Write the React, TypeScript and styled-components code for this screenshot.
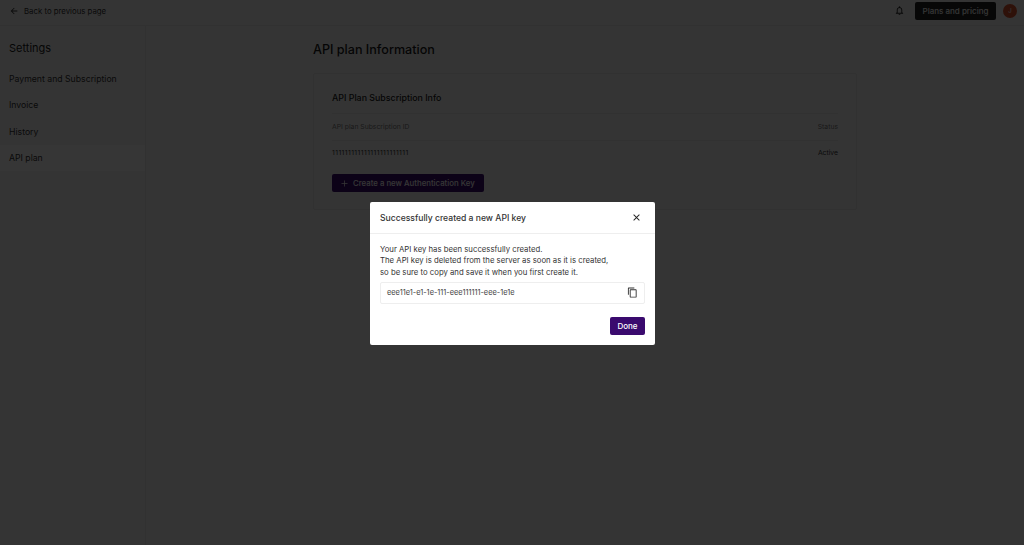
import React from "react";
import styled, { createGlobalStyle } from "styled-components";
import {
  MdArrowBack,
  MdClose,
  MdOutlineContentCopy,
  MdOutlineNotifications,
} from "react-icons/md";
import { FiPlus } from "react-icons/fi";

const GlobalStyle = createGlobalStyle`
  html, body {
    margin: 0;
    padding: 0;
    height: 100%;
    overflow: hidden;
    background: #f6f6f6;
    font-family: Inter, "Liberation Sans", sans-serif;
    color: #1a1a1a;
  }
  * { box-sizing: border-box; }
`;

const Page = styled.div`
  width: 1024px;
  height: 545px;
  display: flex;
  flex-direction: column;
`;
const Header = styled.header`
  height: 26px;
  flex-shrink: 0;
  display: flex;
  align-items: center;
  justify-content: space-between;
  padding: 0 7px 4px 9px;
  border-bottom: 1px solid #e6e6e6;
`;
const BackLink = styled.div`
  display: flex;
  align-items: center;
  gap: 5px;
  font-size: 7.8px;
  color: #333;
  svg { font-size: 10px; }
`;
const HeaderActions = styled.div`
  display: flex;
  align-items: center;
  svg { font-size: 11px; color: #222; }
`;
const PricingButton = styled.button`
  height: 18px;
  width: 81px;
  margin-left: 10px;
  border: 0;
  border-radius: 2px;
  background: #222;
  color: #fff;
  font: 500 8px Inter, sans-serif;
`;
const Avatar = styled.div`
  width: 14px;
  height: 14px;
  margin-left: 7px;
  border-radius: 50%;
  background: #d9502c;
  color: #fff;
  font-size: 6px;
  display: flex;
  align-items: center;
  justify-content: center;
`;
const Body = styled.div`
  flex: 1;
  display: flex;
`;
const Sidebar = styled.aside`
  width: 146px;
  flex-shrink: 0;
  border-right: 1px solid #e6e6e6;
  padding-top: 15px;
`;
const SidebarTitle = styled.h2`
  margin: 0 0 11px;
  padding-left: 9px;
  height: 14px;
  line-height: 14px;
  font-size: 11px;
  font-weight: 400;
`;
const NavItem = styled.div<{ $active?: boolean }>`
  height: 26.3px;
  display: flex;
  align-items: center;
  padding-left: 9px;
  font-size: 8.7px;
  color: #333;
  background: ${(p) => (p.$active ? "#fff" : "transparent")};
`;
const Main = styled.main`
  flex: 1;
  padding: 15px 0 0 167px;
`;
const PageTitle = styled.h1`
  margin: 0 0 15px;
  height: 17px;
  line-height: 17px;
  font-size: 12.6px;
  font-weight: 500;
`;
const Card = styled.section`
  width: 544px;
  height: 137px;
  padding: 17px 18px 0;
  border: 1px solid #e6e6e6;
  border-radius: 2px;
`;
const CardTitle = styled.h3`
  margin: 0;
  height: 14px;
  line-height: 14px;
  font-size: 8.85px;
  font-weight: 500;
`;
const TableWrap = styled.div`
  margin-top: 8px;
`;
const Row = styled.div<{ $head?: boolean }>`
  height: 26.5px;
  display: flex;
  align-items: center;
  justify-content: space-between;
  padding-bottom: 1px;
  font-size: 6.8px;
  color: ${(p) => (p.$head ? "#777" : "#333")};
  border-top: 1px solid #e6e6e6;
`;
const SubscriptionId = styled.span`
  letter-spacing: 0.43px;
`;
const CreateButton = styled.button`
  margin-top: 8px;
  width: 152px;
  height: 18px;
  padding: 0 0 0 8px;
  display: flex;
  align-items: center;
  gap: 4px;
  border: 0;
  border-radius: 2px;
  background: #3a0a6e;
  color: #fff;
  font: 500 7.8px Inter, sans-serif;
  white-space: nowrap;
  svg { font-size: 9px; }
`;
const Overlay = styled.div`
  position: fixed;
  inset: 0;
  padding: 2px 0 0 1px;
  background: rgba(0, 0, 0, 0.79);
  display: flex;
  align-items: center;
  justify-content: center;
`;
const Modal = styled.div`
  width: 285px;
  height: 143px;
  background: #fff;
  border-radius: 2px;
`;
const ModalHeader = styled.div`
  height: 32px;
  padding: 0 13px 0 10px;
  display: flex;
  align-items: center;
  justify-content: space-between;
  border-bottom: 1px solid #eee;
  font-size: 8.6px;
  font-weight: 500;
  color: #333;
  svg { font-size: 11px; color: #222; }
`;
const ModalBody = styled.div`
  padding: 10px 10px 0;
`;
const Message = styled.p`
  margin: 0;
  font-size: 7.76px;
  line-height: 11.3px;
  color: #333;
`;
const KeyBox = styled.div`
  margin-top: 4px;
  height: 22px;
  padding: 0 6px 0 6px;
  display: flex;
  align-items: center;
  justify-content: space-between;
  border: 1px solid #eee;
  border-radius: 2px;
  font-size: 7.4px;
  color: #444;
  svg { font-size: 11px; color: #333; }
`;
const ModalFooter = styled.div`
  margin-top: 13px;
  display: flex;
  justify-content: flex-end;
`;
const DoneButton = styled.button`
  width: 35px;
  height: 18px;
  padding: 0;
  border: 0;
  border-radius: 2px;
  background: #3a0a6e;
  color: #fff;
  font: 500 8px Inter, sans-serif;
`;

const navItems = ["Payment and Subscription", "Invoice", "History", "API plan"];

export default function App() {
  return (
    <Page>
      <GlobalStyle />
      <Header>
        <BackLink>
          <MdArrowBack />
          Back to previous page
        </BackLink>
        <HeaderActions>
          <MdOutlineNotifications />
          <PricingButton>Plans and pricing</PricingButton>
          <Avatar>J</Avatar>
        </HeaderActions>
      </Header>
      <Body>
        <Sidebar>
          <SidebarTitle>Settings</SidebarTitle>
          {navItems.map((item) => (
            <NavItem key={item} $active={item === "API plan"}>
              {item}
            </NavItem>
          ))}
        </Sidebar>
        <Main>
          <PageTitle>API plan Information</PageTitle>
          <Card>
            <CardTitle>API Plan Subscription Info</CardTitle>
            <TableWrap>
              <Row $head>
                <span>API plan Subscription ID</span>
                <span>Status</span>
              </Row>
              <Row>
                <SubscriptionId>111111111111111111111111</SubscriptionId>
                <span>Active</span>
              </Row>
            </TableWrap>
            <CreateButton>
              <FiPlus />
              Create a new Authentication Key
            </CreateButton>
          </Card>
        </Main>
      </Body>
      <Overlay>
        <Modal>
          <ModalHeader>
            Successfully created a new API key
            <MdClose />
          </ModalHeader>
          <ModalBody>
            <Message>
              Your API key has been successfully created.
              <br />
              The API key is deleted from the server as soon as it is created,
              <br />
              so be sure to copy and save it when you first create it.
            </Message>
            <KeyBox>
              eee11e1-e1-1e-111-eee111111-eee-1e1e
              <MdOutlineContentCopy />
            </KeyBox>
            <ModalFooter>
              <DoneButton>Done</DoneButton>
            </ModalFooter>
          </ModalBody>
        </Modal>
      </Overlay>
    </Page>
  );
}
